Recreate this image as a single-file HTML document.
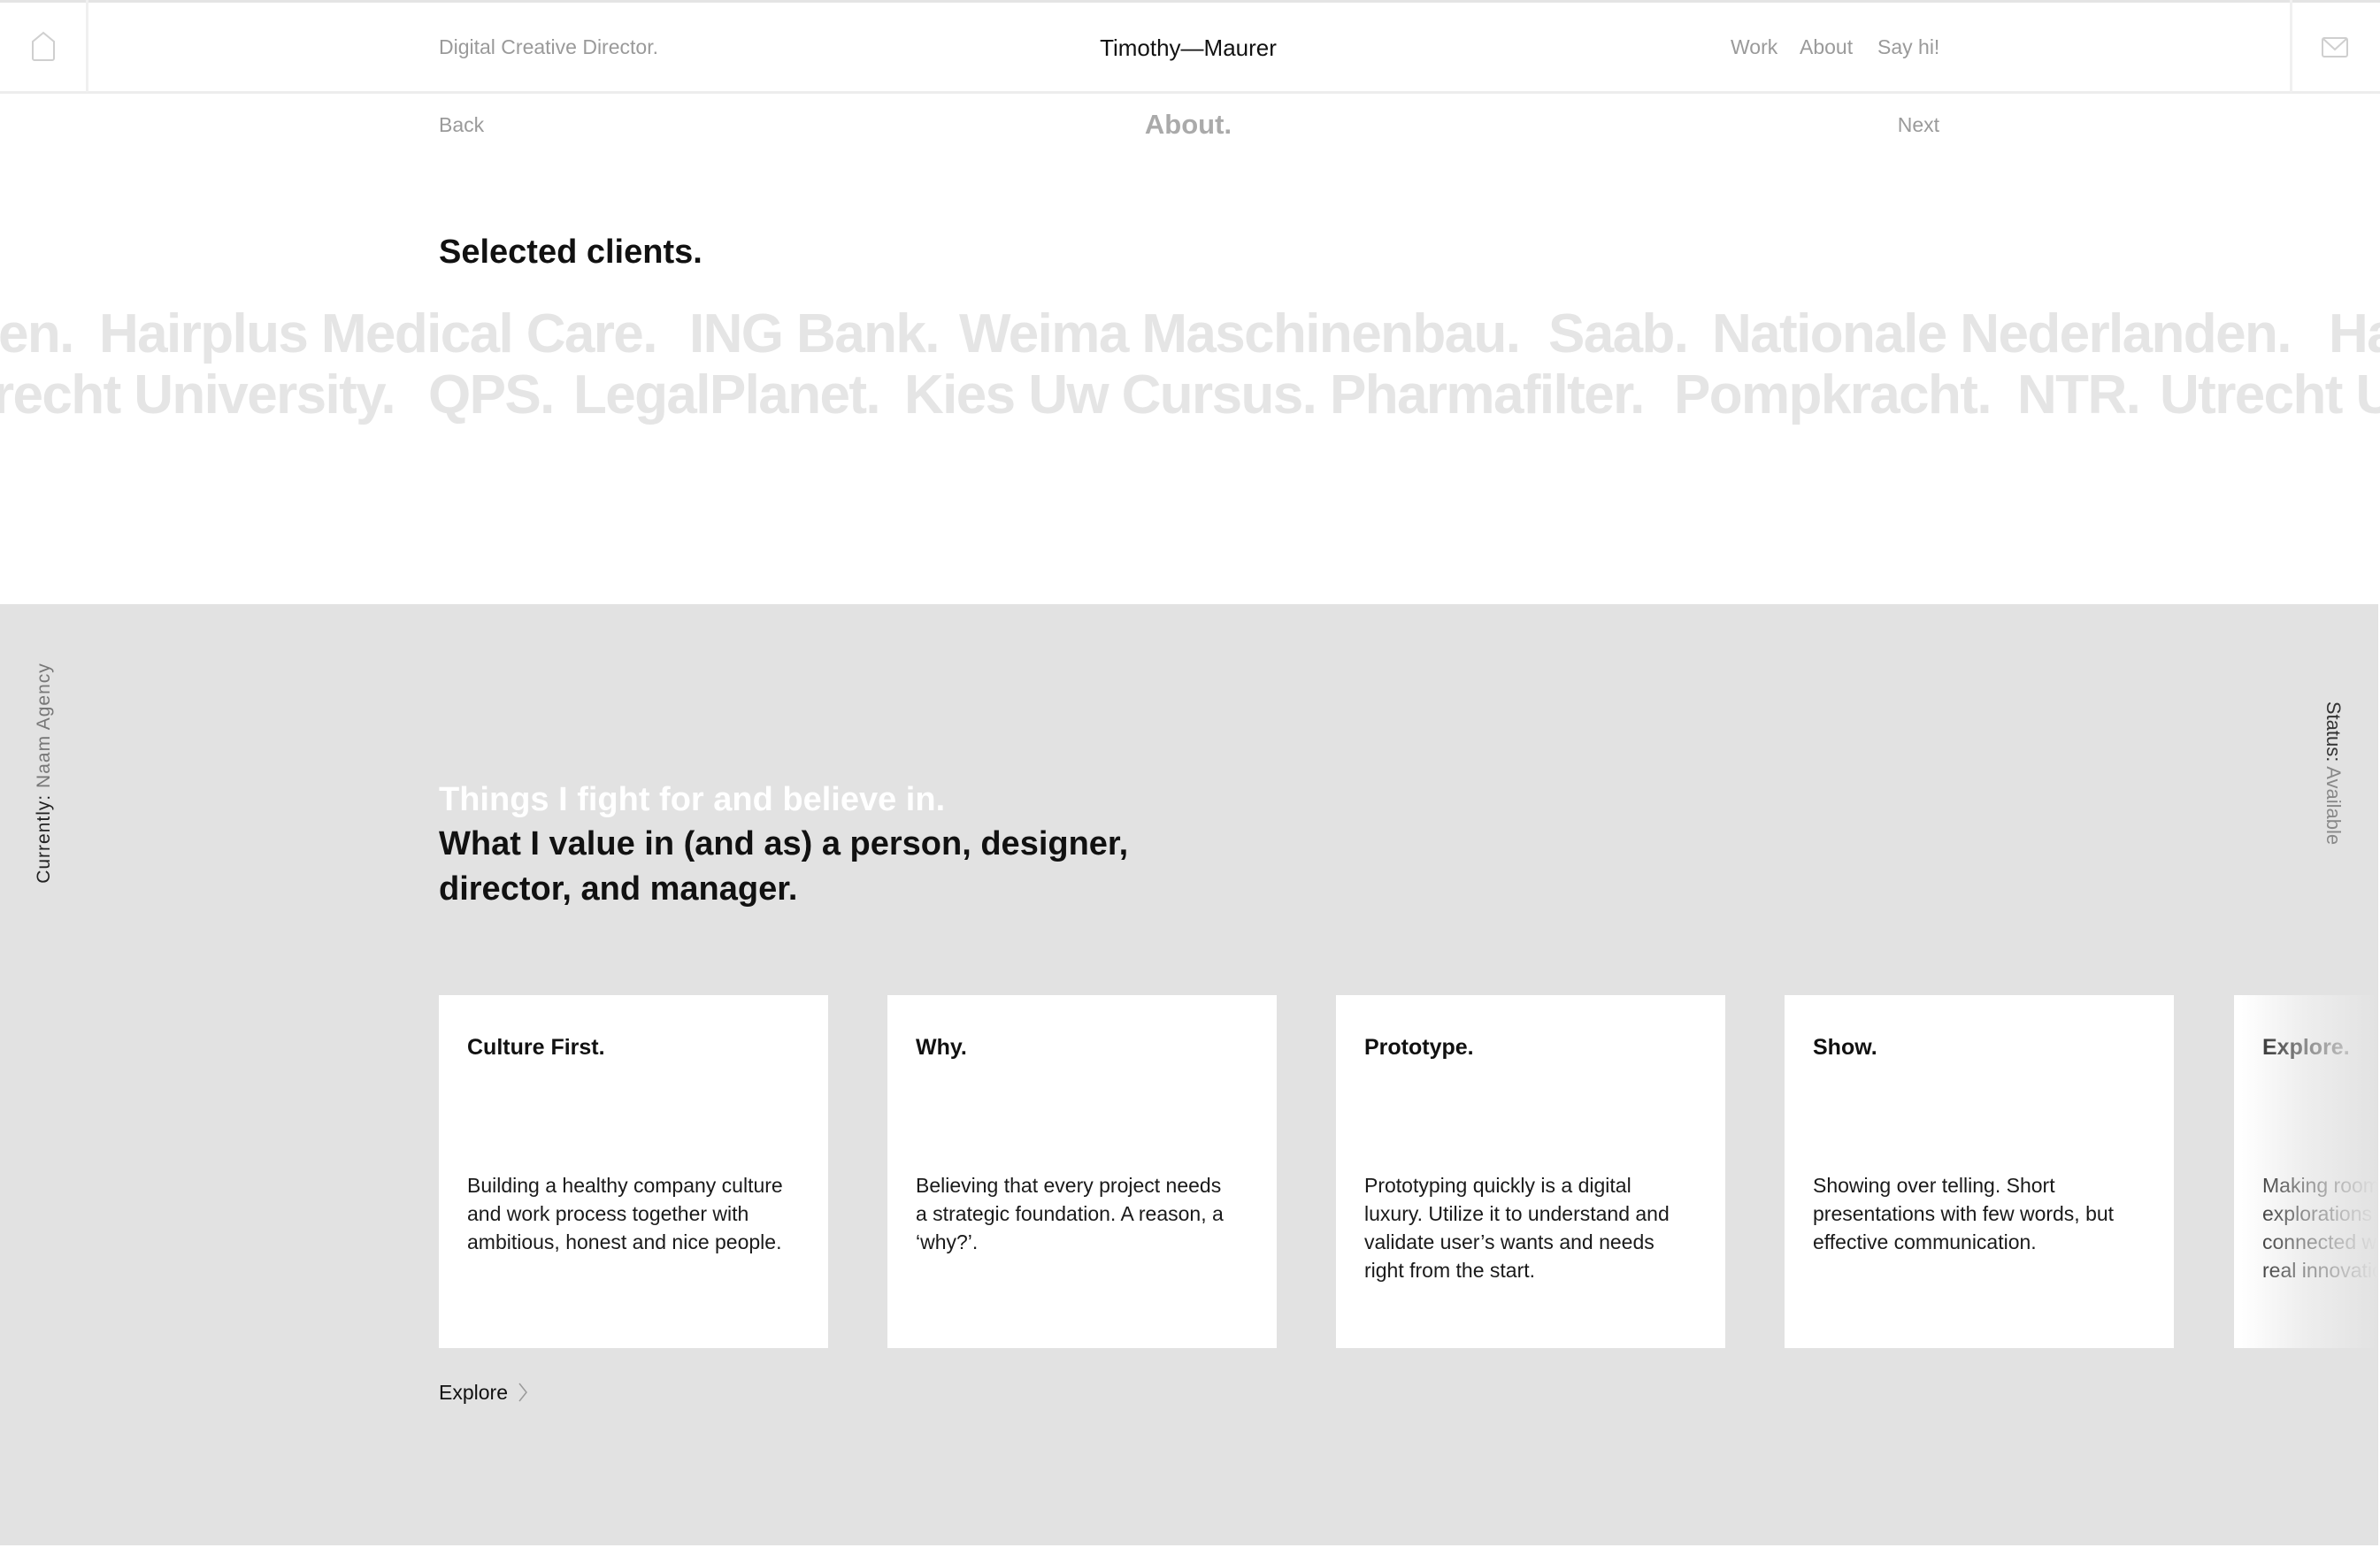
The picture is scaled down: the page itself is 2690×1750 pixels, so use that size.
<!DOCTYPE html>
<html><head><meta charset="utf-8">
<style>
*{margin:0;padding:0;box-sizing:border-box}
html,body{width:2690px;height:1750px;overflow:hidden;background:#fff;font-family:"Liberation Sans",sans-serif;color:#111}
.abs{position:absolute;white-space:nowrap}
#top{position:absolute;left:0;top:0;width:2690px;height:3px;background:#e4e4e4}
#hdr{position:absolute;left:0;top:0;width:2690px;height:106px;border-bottom:3px solid #ededed}
.vl{position:absolute;top:0;width:3px;height:104px;background:#f0f0f0}
.gray{color:#9a9a9a}
.mq{position:absolute;font-size:62px;font-weight:bold;color:#e5e5e5;white-space:nowrap;letter-spacing:-1.6px}
#sec{position:absolute;left:0;top:683px;width:2688px;height:1064px;background:#e2e2e2}
.card{position:absolute;top:1125px;width:440px;height:399px;background:#fff}
.card h3{position:absolute;left:32px;top:45px;font-size:25px;font-weight:bold;color:#111;white-space:nowrap}
.card p{position:absolute;left:32px;top:199px;width:420px;font-size:23px;line-height:32px;color:#1a1a1a;white-space:nowrap}
</style></head><body>
<div id="hdr"></div>
<div id="top"></div>
<div class="vl" style="left:97px"></div>
<div class="vl" style="left:2588px"></div>
<svg class="abs" style="left:34px;top:35px" width="30" height="36" viewBox="0 0 30 36"><path d="M15 2 L27 12 V31 a2 2 0 0 1 -2 2 H5 a2 2 0 0 1 -2 -2 V12 Z" fill="none" stroke="#cfcfcf" stroke-width="2"/></svg>
<svg class="abs" style="left:2623px;top:41px" width="32" height="25" viewBox="0 0 32 25"><rect x="2" y="2" width="28" height="21" rx="2" fill="none" stroke="#cfcfcf" stroke-width="2"/><path d="M3 3 L16 15 L29 3" fill="none" stroke="#cfcfcf" stroke-width="2"/></svg>

<div class="abs gray" style="left:496px;top:40px;font-size:23px">Digital Creative Director.</div>
<div class="abs" style="left:1243px;top:39px;width:200px;text-align:center;font-size:26px;color:#111">Timothy—Maurer</div>
<div class="abs gray" style="left:1956px;top:40px;font-size:23px">Work</div>
<div class="abs gray" style="left:2034px;top:40px;font-size:23px">About</div>
<div class="abs gray" style="left:2122px;top:40px;font-size:23px">Say hi!</div>

<div class="abs gray" style="left:496px;top:128px;font-size:23px">Back</div>
<div class="abs" style="left:1243px;top:123px;width:200px;text-align:center;font-size:31px;color:#aaa;font-weight:bold">About.</div>
<div class="abs gray" style="left:2092px;top:128px;width:100px;text-align:right;font-size:23px">Next</div>

<div class="abs" style="left:496px;top:264px;font-size:38px;font-weight:bold;color:#111">Selected clients.</div>

<div class="mq" style="left:-2px;top:342px">en.</div>
<div class="mq" style="left:112px;top:342px">Hairplus Medical Care.</div>
<div class="mq" style="left:779px;top:342px">ING Bank.</div>
<div class="mq" style="left:1084px;top:342px">Weima Maschinenbau.</div>
<div class="mq" style="left:1750px;top:342px">Saab.</div>
<div class="mq" style="left:1935px;top:342px">Nationale Nederlanden.</div>
<div class="mq" style="left:2632px;top:342px">Ha</div>

<div class="mq" style="left:-8px;top:411px">recht University.</div>
<div class="mq" style="left:484px;top:411px">QPS.</div>
<div class="mq" style="left:648px;top:411px">LegalPlanet.</div>
<div class="mq" style="left:1022px;top:411px">Kies Uw Cursus.</div>
<div class="mq" style="left:1503px;top:411px">Pharmafilter.</div>
<div class="mq" style="left:1892px;top:411px">Pompkracht.</div>
<div class="mq" style="left:2280px;top:411px">NTR.</div>
<div class="mq" style="left:2441px;top:411px">Utrecht U</div>

<div id="sec"></div>
<div class="abs" style="left:50px;top:874px;transform:translate(-50%,-50%) rotate(-90deg);font-size:21px;letter-spacing:1px;color:#222">Currently: <span style="color:#777">Naam Agency</span></div>
<div class="abs" style="left:2637px;top:874px;transform:translate(-50%,-50%) rotate(90deg);font-size:22px;color:#333">Status: <span style="color:#888">Available</span></div>

<div class="abs" style="left:496px;top:879px;font-size:38px;line-height:51px;color:#fff;font-weight:bold">Things I fight for and believe in.</div>
<div class="abs" style="left:496px;top:929px;font-size:38px;line-height:51px;color:#111;font-weight:bold;white-space:normal;width:780px">What I value in (and as) a person, designer, director, and manager.</div>

<div class="card" style="left:496px"><h3>Culture First.</h3><p>Building a healthy company culture<br>and work process together with<br>ambitious, honest and nice people.</p></div>
<div class="card" style="left:1003px"><h3>Why.</h3><p>Believing that every project needs<br>a strategic foundation. A reason, a<br>‘why?’.</p></div>
<div class="card" style="left:1510px"><h3>Prototype.</h3><p>Prototyping quickly is a digital<br>luxury. Utilize it to understand and<br>validate user’s wants and needs<br>right from the start.</p></div>
<div class="card" style="left:2017px"><h3>Show.</h3><p>Showing over telling. Short<br>presentations with few words, but<br>effective communication.</p></div>
<div class="card" style="left:2525px;width:163px;overflow:hidden"><h3>Explore.</h3><p>Making room for<br>explorations<br>connected with<br>real innovation.</p></div>
<div class="abs" style="left:2525px;top:1125px;width:163px;height:399px;background:linear-gradient(to right,rgba(226,226,226,0) 5%,rgba(226,226,226,0.6) 50%,#e2e2e2)"></div>

<div class="abs" style="left:496px;top:1561px;font-size:23px;color:#111">Explore</div>
<svg class="abs" style="left:585px;top:1562px" width="12" height="24" viewBox="0 0 12 24"><path d="M2 2 L10 12 L2 22" fill="none" stroke="#999" stroke-width="1.5"/></svg>
</body></html>
